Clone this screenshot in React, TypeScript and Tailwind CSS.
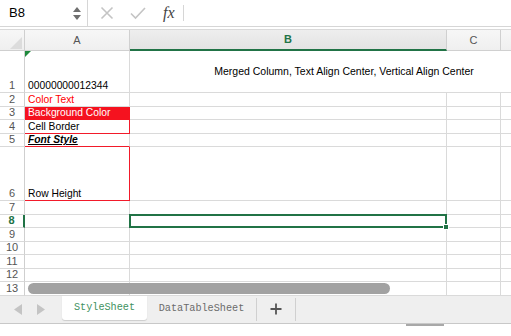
import React from "react";

const rowHeights = ["42px", "13.5px", "13.5px", "13.5px", "13.5px", "54px", "13.5px", "13.5px", "13.5px", "13.5px", "13.5px", "13.5px", "13.5px"];

function RowHead({ n, active }: { n: number; active?: boolean }) {
  return (
    <div
      className={
        "flex items-end justify-center bg-white border-b border-[#d9d9d9] text-[11px] leading-[13px] " +
        (active ? "border-r-2 border-r-[#217346] text-[#217346] font-bold" : "border-r border-r-[#cfcfcf] text-[#555]")
      }
    >
      <span>{n}</span>
    </div>
  );
}

const cell = "border-r border-b border-[#dadada] bg-white";
const txt = "flex items-end pl-[3px] text-[10.3px] leading-[13px]";

export default function App() {
  return (
    <div
      className="relative w-[511px] h-[336px] overflow-hidden bg-white text-black"
      style={{ fontFamily: '"Liberation Sans", Arial, sans-serif' }}
    >
      {/* Formula bar */}
      <div className="flex h-[27px] border-b border-[#d6d6d6] items-stretch">
        <div className="w-[88px] flex items-center border-r border-[#d6d6d6] pl-[9px] pr-[6px] justify-between">
          <span className="text-[13px] text-black">B8</span>
          <svg width="8" height="16" viewBox="0 0 8 16">
            <polygon points="4,2 8,7 0,7" fill="#6f6f6f" />
            <polygon points="0,10 8,10 4,15" fill="#6f6f6f" />
          </svg>
        </div>
        <div className="flex items-center">
          <svg className="ml-[12px]" width="14" height="14" viewBox="0 0 14 14">
            <path d="M1.5 1.5 L12.5 12.5 M12.5 1.5 L1.5 12.5" stroke="#c4c4c4" strokeWidth="1.6" />
          </svg>
          <svg className="ml-[16px]" width="16" height="14" viewBox="0 0 16 14">
            <path d="M1 7.5 L5.5 12 L15 2" stroke="#c4c4c4" strokeWidth="1.6" fill="none" />
          </svg>
          <span
            className="ml-[17px] text-[16px] italic text-[#444]"
            style={{ fontFamily: '"Liberation Serif", "Times New Roman", serif' }}
          >
            fx
          </span>
          <div className="ml-[8px] w-px h-[16px] bg-[#d6d6d6]" />
        </div>
      </div>

      <div className="h-[2px]" />

      {/* Grid */}
      <div className="relative">
        <div
          className="grid border-t border-[#d9d9d9]"
          style={{
            gridTemplateColumns: "25px 105px 317px 54px 10px",
            gridTemplateRows: "21px " + rowHeights.join(" "),
          }}
        >
          {/* header row */}
          <div className="relative border-r border-b border-[#cfcfcf] bg-gradient-to-b from-[#f7f7f7] to-[#efefef]">
            <svg className="absolute right-[2px] bottom-[1px]" width="12" height="12" viewBox="0 0 12 12">
              <polygon points="0,12 12,12 12,0" fill="#dcdcdc" />
            </svg>
          </div>
          <div className="flex items-center justify-center border-r border-b border-[#d0d0d0] bg-gradient-to-b from-[#f7f7f7] to-[#efefef] text-[11px] text-[#555]">
            A
          </div>
          <div className="flex items-center justify-center border-b-2 border-b-[#217346] border-r border-r-[#d0d0d0] bg-gradient-to-b from-[#eeeeee] to-[#e3e3e3] text-[11px] font-bold text-[#217346]">
            B
          </div>
          <div className="flex items-center justify-center border-r border-b border-[#d0d0d0] bg-gradient-to-b from-[#f7f7f7] to-[#efefef] text-[11px] text-[#555]">
            C
          </div>
          <div className="border-b border-[#d0d0d0] bg-gradient-to-b from-[#f7f7f7] to-[#efefef]" />

          {/* row 1 */}
          <RowHead n={1} />
          <div className={cell + " relative " + txt}>
            <svg className="absolute left-0 top-0" width="6" height="6" viewBox="0 0 6 6">
              <polygon points="0,0 6,0 0,6" fill="#1f8a3c" />
            </svg>
            00000000012344
          </div>
          <div className="col-span-3 flex items-center justify-center border-b border-[#dadada] text-[10.5px] pl-[47px]">
            Merged Column, Text Align Center, Vertical Align Center
          </div>

          {/* row 2 */}
          <RowHead n={2} />
          <div className={cell + " " + txt + " text-[#ff0000]"}>Color Text</div>
          <div className={cell} />
          <div className={cell} />
          <div className="border-b border-[#dadada]" />

          {/* row 3 */}
          <RowHead n={3} />
          <div className={txt + " text-white bg-[#f5121f] border-b border-[#f5121f]"}>Background Color</div>
          <div className={cell} />
          <div className={cell} />
          <div className="border-b border-[#dadada]" />

          {/* row 4 */}
          <RowHead n={4} />
          <div className={txt + " bg-white border-r border-b border-[#f21a2a]"}>Cell Border</div>
          <div className={cell} />
          <div className={cell} />
          <div className="border-b border-[#dadada]" />

          {/* row 5 */}
          <RowHead n={5} />
          <div className={txt + " bg-white border-r border-r-[#dadada] border-b border-b-[#f21a2a] font-bold italic underline"}>
            Font Style
          </div>
          <div className={cell} />
          <div className={cell} />
          <div className="border-b border-[#dadada]" />

          {/* row 6 */}
          <RowHead n={6} />
          <div className={txt + " bg-white border-r border-b border-[#f21a2a]"}>Row Height</div>
          <div className={cell} />
          <div className={cell} />
          <div className="border-b border-[#dadada]" />

          {/* row 7 */}
          <RowHead n={7} />
          <div className={cell} />
          <div className={cell} />
          <div className={cell} />
          <div className="border-b border-[#dadada]" />

          {/* row 8 */}
          <RowHead n={8} active />
          <div className={cell} />
          <div className="relative border-2 border-[#217346] -mt-px -ml-px bg-white">
            <div className="absolute right-[-4px] bottom-[-4px] w-[6px] h-[6px] bg-[#217346] border border-white" />
          </div>
          <div className={cell} />
          <div className="border-b border-[#dadada]" />

          {[9, 10, 11, 12, 13].map((n) => (
            <React.Fragment key={n}>
              <RowHead n={n} />
              <div className={cell} />
              <div className={cell} />
              <div className={cell} />
              <div className="border-b border-[#dadada]" />
            </React.Fragment>
          ))}
        </div>

        {/* horizontal scrollbar */}
        <div className="absolute left-[28px] bottom-[2px] w-[362px] h-[11px] rounded-full bg-[#a2a2a2]" />
      </div>

      {/* Tab bar */}
      <div className="flex h-[28px] bg-[#efefef] border-b border-[#c8c8c8] items-stretch">
        <div className="w-[62px] flex items-center pl-[14px] gap-[15px]">
          <svg width="8" height="11" viewBox="0 0 8 11">
            <polygon points="8,0 8,11 0,5.5" fill="#c4c4c4" />
          </svg>
          <svg width="8" height="11" viewBox="0 0 8 11">
            <polygon points="0,0 0,11 8,5.5" fill="#c4c4c4" />
          </svg>
        </div>
        <div
          className="w-[85px] h-[24px] bg-white rounded-b-[3px] shadow-[0_1px_1px_rgba(0,0,0,0.15)] flex items-center justify-center text-[10.2px] text-[#3e9160]"
          style={{ fontFamily: '"Liberation Mono", "Courier New", monospace' }}
        >
          StyleSheet
        </div>
        <div
          className="w-[110px] flex items-center justify-center text-[10.2px] text-[#6b6b6b] border-r border-[#d0d0d0] my-[2px]"
          style={{ fontFamily: '"Liberation Mono", "Courier New", monospace' }}
        >
          DataTableSheet
        </div>
        <div className="w-[39px] flex items-center justify-center border-r border-[#d0d0d0] my-[2px]">
          <svg width="12" height="12" viewBox="0 0 12 12">
            <path d="M6 0.5 V11.5 M0.5 6 H11.5" stroke="#555" strokeWidth="1.8" />
          </svg>
        </div>
      </div>
      <div className="absolute left-[406px] top-[324px] w-[38px] h-[2px] bg-[#a8a8a8]" />
    </div>
  );
}
